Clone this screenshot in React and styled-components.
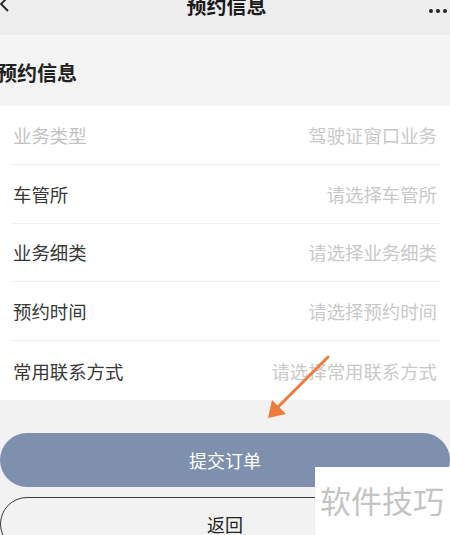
import React from 'react';
import styled, { createGlobalStyle } from 'styled-components';

const GlobalStyle = createGlobalStyle`
  html, body {
    margin: 0;
    padding: 0;
    background: #f2f2f2;
  }
  * {
    box-sizing: border-box;
  }
  body {
    font-family: 'Noto Sans CJK SC', 'Noto Sans', sans-serif;
  }
`;

const Page = styled.div`
  position: relative;
  width: 450px;
  height: 535px;
  overflow: hidden;
  background: #f2f2f2;
`;

// nav bar is partly cut off at the top of the screenshot
const NavBar = styled.div`
  height: 43px;
  margin-top: -8px;
  background: #ededed;
  display: flex;
  align-items: flex-start;
  justify-content: space-between;
`;

const NavSide = styled.div`
  width: 60px;
  display: flex;
  justify-content: ${(p) => (p.right ? 'flex-end' : 'flex-start')};
  padding-top: ${(p) => (p.right ? '17px' : '4px')};
  padding-right: ${(p) => (p.right ? '3px' : '0')};
`;

const NavTitle = styled.div`
  font-size: 20px;
  line-height: 28px;
  color: #1a1a1a;
  font-weight: 600;
  padding-left: 3px;
`;

const Dots = styled.div`
  display: flex;
  gap: 3px;
  span {
    width: 4px;
    height: 4px;
    border-radius: 50%;
    background: #222;
  }
`;

const SectionHeader = styled.div`
  height: 71px;
  background: #f4f4f4;
  display: flex;
  align-items: center;
  padding-top: 4px;
  h2 {
    margin: 0 0 0 -3px;
    font-size: 20px;
    font-weight: 700;
    color: #222;
  }
`;

const List = styled.div`
  background: #fff;
  padding: 0 10px 0 12px;
`;

const Row = styled.div`
  height: 58.8px;
  display: flex;
  align-items: center;
  justify-content: space-between;
  border-bottom: ${(p) => (p.last ? 'none' : '1px solid #f0f0f0')};
  font-size: 18.4px;
  padding: 0 3px 0 1px;
`;

const Label = styled.span`
  color: ${(p) => (p.disabled ? '#c2c2c2' : '#383838')};
`;

const Value = styled.span`
  color: #c9c9c9;
`;

const Actions = styled.div`
  display: flex;
  flex-direction: column;
  gap: 10px;
  padding-top: 33px;
`;

const Button = styled.div`
  height: 54px;
  border-radius: 27px;
  display: flex;
  align-items: center;
  justify-content: center;
  font-size: 18px;
  background: ${(p) => (p.primary ? '#7f8fae' : 'transparent')};
  color: ${(p) => (p.primary ? '#fff' : '#222')};
  border: ${(p) => (p.primary ? 'none' : '1px solid #3a3a3a')};
`;

const Watermark = styled.div`
  position: absolute;
  right: 0;
  bottom: 0;
  width: 135px;
  height: 68px;
  background: #fff;
  display: flex;
  align-items: center;
  padding-left: 5px;
  padding-bottom: 4px;
  font-size: 31px;
  color: #c4c4c4;
`;

const Arrow = styled.svg`
  position: absolute;
  left: 260px;
  top: 350px;
`;

const rows = [
  { label: '业务类型', value: '驾驶证窗口业务', disabled: true },
  { label: '车管所', value: '请选择车管所' },
  { label: '业务细类', value: '请选择业务细类' },
  { label: '预约时间', value: '请选择预约时间' },
  { label: '常用联系方式', value: '请选择常用联系方式' },
];

const App = () => {
  return (
    <Page>
      <GlobalStyle />
      <NavBar>
        <NavSide>
          <svg width="12" height="16" viewBox="0 0 12 16">
            <path d="M8 1 L1 8 L8 15" fill="none" stroke="#222" strokeWidth="1.8" />
          </svg>
        </NavSide>
        <NavTitle>预约信息</NavTitle>
        <NavSide right>
          <Dots>
            <span />
            <span />
            <span />
          </Dots>
        </NavSide>
      </NavBar>
      <SectionHeader>
        <h2>预约信息</h2>
      </SectionHeader>
      <List>
        {rows.map((r, i) => (
          <Row key={r.label} last={i === rows.length - 1}>
            <Label disabled={r.disabled}>{r.label}</Label>
            <Value>{r.value}</Value>
          </Row>
        ))}
      </List>
      <Actions>
        <Button primary>提交订单</Button>
        <Button>返回</Button>
      </Actions>
      <Arrow width="80" height="80" viewBox="0 0 80 80">
        <line x1="68" y1="7" x2="14" y2="61" stroke="#ee7a3c" strokeWidth="3" strokeLinecap="round" />
        <path d="M8 68 L12 50 L26 64 Z" fill="#ee7a3c" />
      </Arrow>
      <Watermark>软件技巧</Watermark>
    </Page>
  );
};

export default App;
